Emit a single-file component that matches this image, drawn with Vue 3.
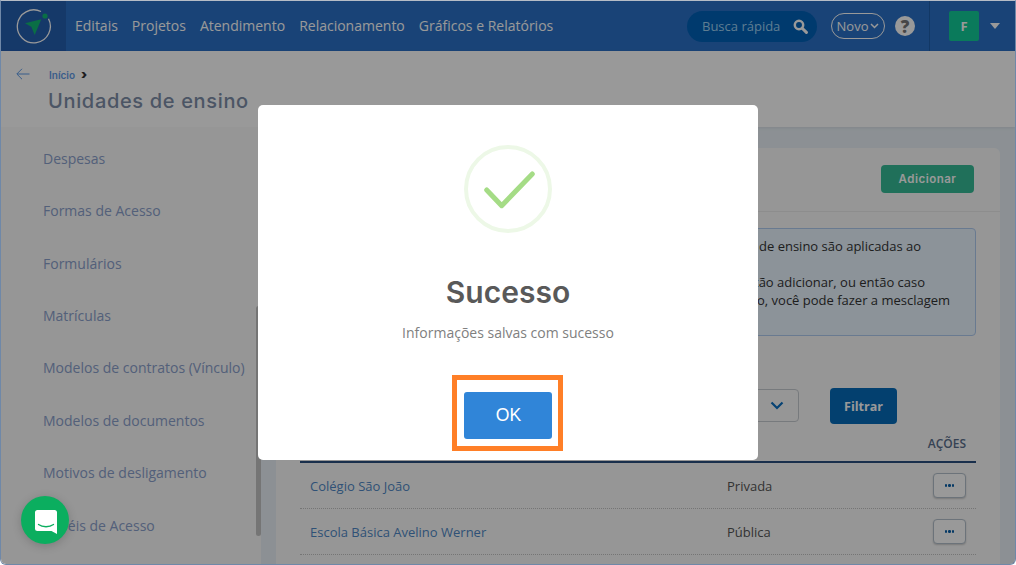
<script setup>
const navItems = ['Editais', 'Projetos', 'Atendimento', 'Relacionamento', 'Gráficos e Relatórios']
const menu = ['Despesas', 'Formas de Acesso', 'Formulários', 'Matrículas', 'Modelos de contratos (Vínculo)', 'Modelos de documentos', 'Motivos de desligamento', 'Papéis de Acesso']
const rows = [
  { name: 'Colégio São João', type: 'Privada' },
  { name: 'Escola Básica Avelino Werner', type: 'Pública' }
]
</script>

<template>
  <div class="frame">
    <header class="topbar">
      <div class="logo">
        <svg width="40" height="40" viewBox="0 0 40 40">
          <path d="M28 5.500A16.500 16.500 0 1 0 35.500 12.800" fill="none" stroke="#fff" stroke-width="1.300" />
          <circle cx="32" cy="10" r="2.600" fill="#11b873" />
          <path d="M28.300 13.300 12 17.300l6.300 3.400 3.400 8.300z" fill="#11b873" />
        </svg>
      </div>
      <nav class="nav">
        <a v-for="item in navItems" :key="item">{{ item }}</a>
      </nav>
      <div class="search">
        <span>Busca rápida</span>
        <svg width="15" height="15" viewBox="0 0 15 15">
          <circle cx="6" cy="6" r="4.200" fill="none" stroke="#fff" stroke-width="2.500" />
          <path d="m9.200 9.200 4.200 4.200" stroke="#fff" stroke-width="3" stroke-linecap="round" />
        </svg>
      </div>
      <button class="novo">
        Novo
        <svg width="9" height="6" viewBox="0 0 9 6"><path d="m1 1 3.500 3.500L8 1" fill="none" stroke="#fff" stroke-width="1.500" /></svg>
      </button>
      <span class="help">?</span>
      <div class="user">
        <span class="avatar">F</span>
        <span class="caret"></span>
      </div>
    </header>

    <section class="pagehead">
      <svg class="back" width="14" height="12" viewBox="0 0 14 12">
        <path d="M13.500 6H1M6 .8 .8 6 6 11.200" fill="none" stroke="#5f9ce8" stroke-width="1" />
      </svg>
      <div>
        <div class="crumb"><a>Início</a><b>›</b></div>
        <h1>Unidades de ensino</h1>
      </div>
    </section>

    <div class="body">
      <aside class="sidebar">
        <a v-for="item in menu" :key="item">{{ item }}</a>
        <span class="scroll"></span>
      </aside>
      <main class="card">
        <div class="cardhead"><button class="add">Adicionar</button></div>
        <div class="cardbody">
          <div class="info">
            <p class="l1">de ensino são aplicadas ao</p>
            <p class="l2">tão adicionar, ou então caso</p>
            <p class="l3">o, você pode fazer a mesclagem</p>
          </div>
          <div class="filters">
            <div class="select">
              <svg width="14" height="9" viewBox="0 0 14 9"><path d="m1.500 1.500 5.500 5.500 5.500-5.500" fill="none" stroke="#0a6ec0" stroke-width="2.200" /></svg>
            </div>
            <button class="filter">Filtrar</button>
          </div>
          <div class="thead"><span>AÇÕES</span></div>
          <div v-for="row in rows" :key="row.name" class="row">
            <a>{{ row.name }}</a>
            <span>{{ row.type }}</span>
            <button class="more"><i></i><i></i><i></i></button>
          </div>
        </div>
      </main>
    </div>

    <div class="overlay">
      <div class="modal">
        <svg class="success" width="88" height="88" viewBox="0 0 88 88">
          <circle cx="44" cy="44" r="42" fill="none" stroke="#edf8e7" stroke-width="4" />
          <path d="M22.700 45 37.700 60.700 68.300 29" fill="none" stroke="#a5dc86" stroke-width="5" stroke-linecap="round" stroke-linejoin="round" />
        </svg>
        <h2>Sucesso</h2>
        <p>Informações salvas com sucesso</p>
        <div class="highlight"><button class="ok">OK</button></div>
      </div>
    </div>

    <button class="chat">
      <svg width="24" height="26" viewBox="0 0 24 26">
        <path d="M3.500 1h17A2.500 2.500 0 0 1 23 3.500V25l-5.500-3H3.500A2.500 2.500 0 0 1 1 19.500v-16A2.500 2.500 0 0 1 3.500 1z" fill="#fff" />
        <path d="M4.500 15.500c4 3 11 3 15 0" fill="none" stroke="#0bae5f" stroke-width="1.300" stroke-linecap="round" />
      </svg>
    </button>
  </div>
</template>

<style>
html, body { margin: 0; background: #fff; overflow: hidden; }
</style>

<style scoped>
* { box-sizing: border-box; }
.frame {
  position: relative;
  width: 1016px;
  height: 565px;
  display: flex;
  flex-direction: column;
  border: 1px solid #6f88a8;
  border-top-color: #b5bcc6;
  border-radius: 0 0 6px 6px;
  overflow: hidden;
  background: #e9f1f7;
  font-family: "Open Sans", sans-serif;
}
.topbar {
  height: 50px;
  flex: none;
  display: flex;
  align-items: center;
  background: #2b71c6;
  color: #fff;
}
.logo {
  width: 65px;
  height: 100%;
  flex: none;
  background: #245fb0;
  display: flex;
  align-items: center;
  justify-content: center;
  padding-right: 1px;
}
.nav {
  display: flex;
  gap: 14px;
  margin: -2px 0 0 9px;
  font-size: 14px;
  flex: 1;
}
.search {
  width: 130px;
  height: 31px;
  display: flex;
  align-items: center;
  justify-content: space-between;
  padding: 0 9px 0 15px;
  background: #0061b8;
  border-radius: 16px;
  font-size: 13px;
  color: #9fd0f2;
}
.novo {
  width: 54px;
  height: 26px;
  margin-left: 14px;
  padding: 0;
  display: flex;
  align-items: center;
  justify-content: center;
  gap: 2px;
  background: none;
  border: 1px solid #fff;
  border-radius: 13px;
  color: #fff;
  font: 13px "Open Sans", sans-serif;
}
.help {
  width: 20px;
  height: 20px;
  margin-left: 10px;
  border-radius: 50%;
  background: #fff;
  color: #777;
  display: flex;
  align-items: center;
  justify-content: center;
  font: 800 17px "Open Sans", sans-serif;
}
.user {
  height: 100%;
  margin-left: 14px;
  padding-left: 19px;
  width: 86px;
  border-left: 1px solid #1f5ea8;
  display: flex;
  align-items: center;
}
.avatar {
  width: 30px;
  height: 30px;
  border-radius: 2px;
  background: #11cc98;
  display: flex;
  align-items: center;
  justify-content: center;
  font-size: 13px;
  font-weight: 700;
}
.caret {
  margin-left: 11px;
  border: 5.500px solid transparent;
  border-top: 6px solid #fff;
  border-bottom: 0;
}
.pagehead {
  height: 76px;
  flex: none;
  display: flex;
  align-items: flex-start;
  background: #fff;
  padding: 17px 0 0 15px;
  box-shadow: 0 1px 3px rgba(0, 0, 0, .08);
  position: relative;
}
.back { margin: 0 19px 0 0; }
.crumb {
  height: 14px;
  display: flex;
  align-items: center;
  gap: 6px;
  font: 600 10px Inter, sans-serif;
  color: #5f9ce8;
}
.crumb b { color: #333; font-size: 13px; margin-top: -2px; }
h1 {
  margin: 7px 0 0 -1px;
  font: 500 20px Inter, sans-serif;
  letter-spacing: .66px;
  color: #7e8ea8;
}
.body { flex: 1; display: flex; min-height: 0; }
.sidebar {
  position: relative;
  width: 260px;
  flex: none;
  padding: 5.200px 0 0 42px;
  background: #fafafa;
  display: flex;
  flex-direction: column;
  font-size: 14px;
  color: #8aa0cc;
}
.sidebar a {
  height: 52.400px;
  flex: none;
  display: flex;
  align-items: center;
  white-space: nowrap;
}
.scroll {
  position: absolute;
  left: 255px;
  top: 179px;
  width: 5px;
  height: 230px;
  background: #c4c4c4;
  border-radius: 3px;
}
.card {
  width: 724px;
  margin: 21px 0 0 15px;
  background: #fbfbfb;
  border-radius: 6px 6px 0 0;
  flex: none;
}
.cardhead {
  height: 64px;
  display: flex;
  align-items: center;
  justify-content: flex-end;
  padding: 0 26px 2px 0;
  border-bottom: 1px solid #ececec;
}
.add {
  width: 93px;
  height: 28px;
  border: 0;
  border-radius: 4px;
  background: #36bb96;
  color: #fff;
  font: 600 11.500px Inter, sans-serif;
  letter-spacing: .5px;
}
.cardbody { padding: 16px 24px 0; }
.info {
  height: 108px;
  padding: 8px 0 0 458px;
  background: #e9f5ff;
  border: 1px solid #b0cbf0;
  border-radius: 4px;
  font-size: 13px;
  line-height: 18px;
  color: #333;
}
.info p { margin: 0; white-space: nowrap; }
.info .l2 { margin: 18px 0 0 -5px; }
.info .l3 { margin-left: -2px; }
.filters {
  height: 36px;
  margin-top: 52px;
  display: flex;
  justify-content: flex-end;
  align-items: flex-start;
  padding-right: 79px;
}
.select {
  width: 300px;
  height: 33px;
  margin: 1px 31px 0 0;
  border: 1px solid #c7ccd1;
  border-radius: 4px;
  display: flex;
  align-items: center;
  justify-content: flex-end;
  padding-right: 14px;
}
.filter {
  width: 67px;
  height: 36px;
  border: 0;
  border-radius: 4px;
  background: #056bb9;
  color: #fff;
  font: 700 12.500px "Open Sans", sans-serif;
}
.thead {
  height: 39px;
  display: flex;
  align-items: center;
  justify-content: flex-end;
  padding: 2px 10px 0 0;
  border-bottom: 2px solid #2b4f7f;
  font-size: 12px;
  font-weight: 600;
  color: #5a6f8c;
}
.row {
  height: 46px;
  display: grid;
  grid-template-columns: 417px 1fr auto;
  align-items: center;
  padding: 0 10px;
  border-bottom: 1px dotted #c4c4c4;
  font-size: 13px;
  color: #555;
}
.row a { color: #4f88c6; }
.more {
  width: 33px;
  height: 25px;
  display: flex;
  align-items: center;
  justify-content: center;
  gap: 1px;
  padding: 0;
  border: 1px solid #b4c0cc;
  border-radius: 4px;
  background: #fff;
  box-shadow: 0 1px 2px rgba(0, 0, 0, .2);
}
.more i {
  width: 2.500px;
  height: 2.500px;
  border-radius: 50%;
  background: #0a5fa8;
}
.overlay {
  position: absolute;
  inset: 0;
  z-index: 10;
  background: rgba(0, 0, 0, .4);
  display: flex;
  align-items: center;
  justify-content: center;
}
.modal {
  width: 500px;
  height: 355px;
  padding-top: 40px;
  background: #fff;
  border-radius: 5px;
  display: flex;
  flex-direction: column;
  align-items: center;
}
.success { flex: none; }
h2 {
  margin: 39px 0 0;
  font: 600 30px/40px Inter, sans-serif;
  color: #595959;
}
.modal p {
  margin: 11px 0 0;
  font-size: 14px;
  line-height: 20px;
  color: #808080;
}
.highlight {
  margin: 32px 0 0 -1px;
  width: 111px;
  height: 76px;
  border: 5px solid #ff7f27;
  padding: 12px 0 0 7px;
}
.ok {
  display: block;
  width: 88px;
  height: 47px;
  padding: 0 0 0 1px;
  border: 0;
  border-radius: 3px;
  background: #3085d8;
  color: #fff;
  font: 17.600px "Liberation Sans", Arial, sans-serif;
}
.chat {
  position: absolute;
  left: 20px;
  top: 495px;
  z-index: 20;
  width: 48px;
  height: 48px;
  padding: 3px 0 0 1px;
  border: 0;
  border-radius: 50%;
  background: #0bae5f;
  box-shadow: 0 2px 10px rgba(0, 0, 0, .18);
  display: flex;
  align-items: center;
  justify-content: center;
}
</style>
